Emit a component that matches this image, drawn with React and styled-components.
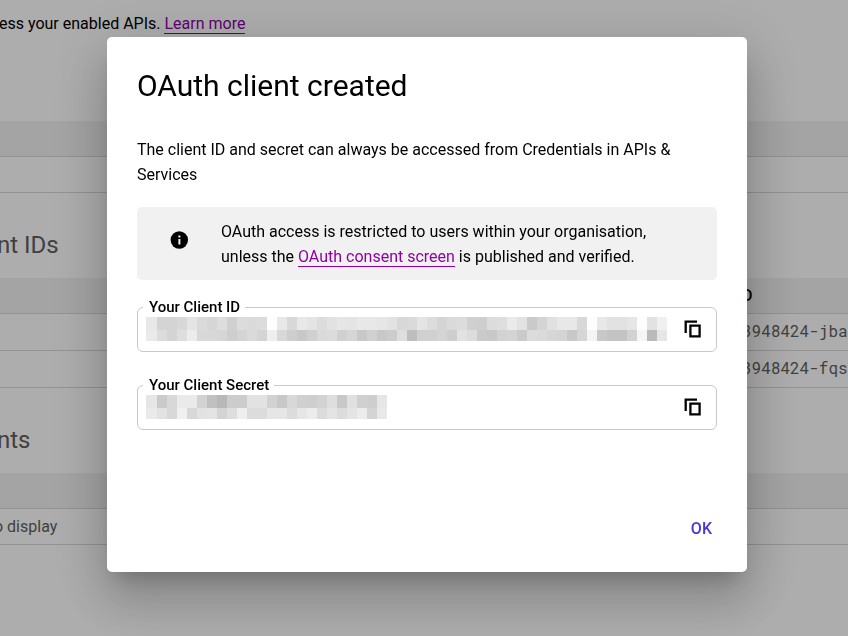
import React from 'react';
import styled, { createGlobalStyle } from 'styled-components';

const clientIdTone = [
    'e8 d4 d4 d8 e4 da d6 dd d0 dc da dc fe e8 d8 e8 e4 dc e2 e6 e4 e8 e8 e6 e2 d8 da e4 dc d4 da dc d0 ce dc de ea e2 ca d4 e0 e8 e8 d8 fd e8 e2 e2 e6 fd e2 f0',
    'ea dc d4 de ec d8 d8 d6 ce d4 da d4 ee d8 ce c8 d0 da dc d0 d6 c8 d0 c8 cc de be d0 d0 d4 ce e2 dc ca c8 d2 d4 ca dc da d6 d4 c8 d6 f4 c8 c4 c4 d2 f6 ba e6'
];

const secretTone = [
    'e6 ca d8 ea ea d2 c0 b8 cc cc e2 e2 d2 c8 d8 d0 ce d2 de c8 e0 d0 ce e6',
    'ea e2 d8 f0 d8 e2 e4 d4 de ee dc dc e6 e6 dc e6 ec dc e4 dc e4 ec d4 e8'
];

const Mosaic = ({ tones, label }) => {
    const rows = tones.map(row => row.split(' '));
    const width = rows[0].length * 10 + 1;

    return (
        <svg width={width} height="24" viewBox={`0 0 ${width} 24`} shapeRendering="crispEdges" role="img" aria-label={label}>
            {rows.map((row, r) =>
                row.map((tone, i) => (
                    <rect
                        key={`${r}-${i}`}
                        x={i === 0 ? 0 : i * 10 + 1}
                        y={r === 0 ? 0 : 13}
                        width={i === 0 ? 11 : 10}
                        height={r === 0 ? 13 : 11}
                        fill={`#${tone}${tone}${tone}`}
                    />
                ))
            )}
        </svg>
    );
};

const CopyIcon = () => (
    <svg width="18" height="18" viewBox="0 0 18 18" fill="none" stroke="#000" strokeWidth="2.3" aria-hidden="true">
        <path d="M1.7 13V1.7H13" />
        <path d="M6.4 5.6h9.2v10.8H6.4z" />
    </svg>
);

const InfoIcon = () => (
    <svg width="18" height="18" viewBox="0 0 18 18" aria-hidden="true">
        <circle cx="9.3" cy="9" r="8.7" fill="#000" />
        <path d="M8.4 4.6h2v2h-2zM8.4 8h2v5.4h-2z" fill="#f1f1f1" />
    </svg>
);

const SecretField = ({ label, tones }) => (
    <Field>
        <legend>{label}</legend>
        <FieldBody>
            <Mosaic tones={tones} label={label} />
            <CopyButton type="button" aria-label={`Copy ${label}`}>
                <CopyIcon />
            </CopyButton>
        </FieldBody>
    </Field>
);

const App = () => (
    <>
        <GlobalStyle />
        <Page>
            <Intro>
                ess your enabled APIs. <Link href="#learn">Learn more</Link>
            </Intro>
            <Table>
                <thead>
                    <tr><th /></tr>
                </thead>
                <tbody>
                    <Row><td /></Row>
                </tbody>
            </Table>
            <SectionTitle>nt IDs</SectionTitle>
            <Table>
                <thead>
                    <tr><th /><IdHead>D</IdHead></tr>
                </thead>
                <tbody>
                    <Row $tall><td /><IdCell>3948424-jba</IdCell></Row>
                    <Row $tall><td /><IdCell>3948424-fqs</IdCell></Row>
                </tbody>
            </Table>
            <SectionTitle>nts</SectionTitle>
            <Table>
                <thead>
                    <tr><th /></tr>
                </thead>
                <tbody>
                    <Row><EmptyCell>o display</EmptyCell></Row>
                </tbody>
            </Table>
        </Page>
        <Overlay>
            <Dialog role="dialog" aria-modal="true" aria-labelledby="dialog-title">
                <Title id="dialog-title">OAuth client created</Title>
                <Text>The client ID and secret can always be accessed from Credentials in APIs &amp; Services</Text>
                <Notice>
                    <InfoIcon />
                    <p>
                        OAuth access is restricted to users within your organisation, unless the{' '}
                        <Link href="#consent">OAuth consent screen</Link> is published and verified.
                    </p>
                </Notice>
                <Fields>
                    <SecretField label="Your Client ID" tones={clientIdTone} />
                    <SecretField label="Your Client Secret" tones={secretTone} />
                </Fields>
                <Actions>
                    <OkButton type="button">OK</OkButton>
                </Actions>
            </Dialog>
        </Overlay>
    </>
);

const GlobalStyle = createGlobalStyle`
    * {
        box-sizing: border-box;
    }

    body {
        margin: 0;
        background: #fff;
        color: #000;
        font: 16px/25px Roboto, "Noto Sans", sans-serif;
    }

    p, h1, h2 {
        margin: 0;
    }
`;

const Page = styled.main`
    min-height: 100vh;
    overflow: hidden;
`;

const Link = styled.a`
    color: #8f00a6;
    text-decoration: none;
    border-bottom: 1px solid #8f00a6;
`;

const Intro = styled.p`
    padding: 11px 0 85px;
    text-indent: -1px;
`;

const SectionTitle = styled.h2`
    padding: 36px 0 17px;
    font-size: 24px;
    font-weight: 400;
    line-height: 32px;
    color: #5f5f5f;
    text-indent: -3px;
`;

const Table = styled.table`
    width: 100%;
    table-layout: fixed;
    border-collapse: separate;
    border-spacing: 0;

    th, td {
        padding: 0;
        border-bottom: 1px solid #d8d8d8;
        text-align: left;
        white-space: nowrap;
    }

    th {
        height: 36px;
        background: #f2f2f2;
        font-weight: 500;
    }
`;

const Row = styled.tr`
    height: ${({ $tall }) => ($tall ? '37px' : '36px')};
`;

const IdHead = styled.th`
    width: 106px;
`;

const IdCell = styled.td`
    && {
        padding-bottom: 4px;
    }

    overflow: hidden;
    color: #5f5f5f;
    font-family: "Roboto Mono", "DejaVu Sans Mono", monospace;
`;

const EmptyCell = styled.td`
    color: #5f5f5f;
    text-indent: -6px;
`;

const Overlay = styled.div`
    position: fixed;
    inset: 0;
    display: flex;
    justify-content: center;
    align-items: flex-start;
    padding: 37px 0 0 6px;
    background: rgba(0, 0, 0, 0.32);
`;

const Dialog = styled.section`
    width: 100%;
    max-width: 640px;
    padding: 30px 30px 26px;
    border-radius: 5px;
    background: #fff;
    box-shadow:
        0 14px 19px -9px rgba(0, 0, 0, 0.2),
        0 30px 48px 4px rgba(0, 0, 0, 0.14),
        0 11px 58px 10px rgba(0, 0, 0, 0.12);
`;

const Title = styled.h1`
    font-size: 30px;
    font-weight: 400;
    line-height: 38px;
`;

const Text = styled.p`
    margin-top: 32px;
`;

const Notice = styled.div`
    display: flex;
    align-items: flex-start;
    gap: 33px;
    margin: 20px 0 17px;
    padding: 12px 33px 11px;
    border-radius: 5px;
    background: #f1f1f1;

    svg {
        flex: none;
        margin-top: 12px;
    }
`;

const Fields = styled.div`
    display: grid;
    gap: 23px;
`;

const Field = styled.fieldset`
    min-width: 0;
    margin: 0;
    padding: 0 14px 10px 5px;
    border: 1px solid #c8c8c8;
    border-radius: 6px;

    legend {
        padding: 0 5px 0 6px;
        font-size: 15px;
        font-weight: 500;
        line-height: 20px;
    }
`;

const FieldBody = styled.div`
    display: flex;
    justify-content: space-between;
    align-items: center;
    height: 24px;
    padding-left: 3px;
`;

const CopyButton = styled.button`
    display: flex;
    padding: 0;
    border: none;
    background: none;
    cursor: pointer;
`;

const Actions = styled.div`
    display: flex;
    justify-content: flex-end;
    margin-top: 80px;
`;

const OkButton = styled.button`
    height: 36px;
    padding: 0 5px;
    border: none;
    background: none;
    color: #4f35d9;
    font: inherit;
    font-weight: 500;
    cursor: pointer;
`;

export default App;
